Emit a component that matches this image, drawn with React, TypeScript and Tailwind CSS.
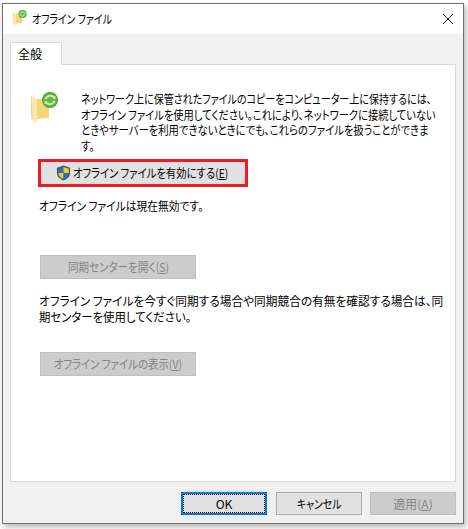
// オフライン ファイル dialog
import React from 'react';

const FONT = "font-['Noto_Sans_CJK_JP','Liberation_Sans',sans-serif] [font-feature-settings:'palt']";

const FolderSync: React.FC<{ width: number }> = ({ width }) => (
  <svg width={width} viewBox="0 0 28 31" className="shrink-0">
    <path d="M6 7 H18 V26 L6 27 Z" fill="#f6d67c" />
    <path d="M0 4 L6 7 V28 L5 31 L1 27 Z" fill="#fbe7ab" />
    <path d="M0 4 L1 27" stroke="#e6c364" strokeWidth="0.7" />
    <circle cx="19" cy="8" r="8" fill="#46a53a" />
    <circle cx="19" cy="8" r="6.8" fill="#5fbb4c" />
    <path d="M14.5 7 A5 5 0 0 1 23 5.5 M23.5 9 A5 5 0 0 1 15 10.5" stroke="#e8f3a8" strokeWidth="1.8" fill="none" />
    <path d="M21.5 6.8 L24.6 6.8 L24.2 3.6 Z M16.5 9.2 L13.4 9.2 L13.8 12.4 Z" fill="#e8f3a8" />
  </svg>
);

const Shield: React.FC = () => (
  <svg width="15" height="16" viewBox="0 0 16 17" className="shrink-0">
    <path d="M8 0.5 L15 3 V8.5 C15 12.5 11.5 15 8 16.5 C4.5 15 1 12.5 1 8.5 V3 Z" fill="#4c5560" />
    <path d="M8 2 L8 8.5 L2.3 8.5 V4 Z" fill="#1b78c8" />
    <path d="M8 2 L13.7 4 V8.5 L8 8.5 Z" fill="#f7c52e" />
    <path d="M2.3 8.5 H8 V15 C5 13.7 2.6 11.6 2.3 8.5 Z" fill="#f7c52e" />
    <path d="M13.7 8.5 H8 V15 C11 13.7 13.4 11.6 13.7 8.5 Z" fill="#1b78c8" />
  </svg>
);

export default function App() {
  return (
    <div className={`${FONT} h-[529px] w-[468px] overflow-hidden bg-white pb-[5px] pl-[2px] pr-[4px] pt-[3px] text-[12px] text-black`}>
      <div className="flex h-full w-full flex-col border border-[#6f6f6f] bg-[#f0f0f0] shadow-[2px_3px_6px_rgba(0,0,0,0.3)]">
        {/* タイトルバー */}
        <div className="flex h-[30px] shrink-0 items-center bg-white pl-[10px] pr-[9px]">
          <div className="mt-[-2px] flex">
            <FolderSync width={14} />
          </div>
          <span className="ml-[5px] flex-1 origin-left scale-x-[0.825] whitespace-nowrap">オフライン ファイル</span>
          <svg width="12" height="12" viewBox="0 0 12 12" className="mt-[-1px]">
            <path d="M1 1 L11 11 M11 1 L1 11" stroke="#222" strokeWidth="1" />
          </svg>
        </div>

        {/* タブ */}
        <div className="flex flex-1 flex-col px-[7px] pt-[8px]">
          <div className="-mb-px relative z-10 flex h-[23px] w-[52px] items-center border border-b-0 border-[#d9d9d9] bg-white pl-[7px]">
            全般
          </div>
          <div className="flex h-[418px] flex-col border border-[#d9d9d9] bg-white pl-[27px] pr-[8px] pt-[26px]">
            <div className="flex">
              <div className="ml-[-7px] mr-[22px] mt-[1px] flex self-start">
                <FolderSync width={28} />
              </div>
              <div className="w-[356px] whitespace-nowrap leading-[15.5px]">
                <span className="block origin-left scale-x-[0.835]">ネットワーク上に保管されたファイルのコピーをコンピューター上に保持するには、</span>
                <span className="block origin-left scale-x-[0.855]">オフライン ファイルを使用してください。これにより、ネットワークに接続していない</span>
                <span className="block origin-left scale-x-[0.862]">ときやサーバーを利用できないときにでも、これらのファイルを扱うことができま</span>
                <span className="block origin-left scale-x-[0.86]">す。</span>
              </div>
            </div>
            <div className="mt-[6px] flex h-[28px] w-[210px] items-center whitespace-nowrap border-[3px] border-[#ed1c24] bg-[#e1e1e1] pl-[15px]">
              <Shield />
              <span className="ml-[2px] origin-left scale-x-[0.86]">
                オフライン ファイルを有効にする(<span className="underline">E</span>)
              </span>
            </div>
            <p className="ml-[1px] mt-[10px] origin-left scale-x-[0.895] whitespace-nowrap">オフライン ファイルは現在無効です。</p>
            <div className="ml-[2px] mt-[40px] flex h-6 w-[156px] items-center justify-center whitespace-nowrap border border-[#bfbfbf] bg-[#cccccc] text-[#858585]">
              <span className="scale-x-[0.88]">
                同期センターを開く(<span className="underline">S</span>)
              </span>
            </div>
            <div className="ml-[1px] mt-[14px] whitespace-nowrap leading-[15.5px]">
              <span className="block origin-left scale-x-[0.974]">オフライン ファイルを今すぐ同期する場合や同期競合の有無を確認する場合は、同</span>
              <span className="block origin-left scale-x-[0.95]">期センターを使用してください。</span>
            </div>
            <div className="ml-[2px] mt-[28px] flex h-6 w-[156px] items-center justify-center whitespace-nowrap border border-[#bfbfbf] bg-[#cccccc] text-[#858585]">
              <span className="scale-x-[0.87]">
                オフライン ファイルの表示(<span className="underline">V</span>)
              </span>
            </div>
          </div>
        </div>

        {/* フッターボタン */}
        <div className="flex h-[42px] shrink-0 items-start justify-end gap-[8px] pr-[7px] pt-[10px]">
          <div className="mr-px flex h-[23px] w-[86px] items-center justify-center border-2 border-[#0078d7] bg-[#e1e1e1] outline-1 -outline-offset-3 outline-dotted outline-black">
            OK
          </div>
          <div className="flex h-[23px] w-[86px] items-center justify-center border border-[#adadad] bg-[#e1e1e1]">
            <span className="scale-x-[0.82]">キャンセル</span>
          </div>
          <div className="flex h-[23px] w-[86px] items-center justify-center border border-[#bfbfbf] bg-[#cccccc] text-[#858585]">
            適用(<span className="underline">A</span>)
          </div>
        </div>
      </div>
    </div>
  );
}
